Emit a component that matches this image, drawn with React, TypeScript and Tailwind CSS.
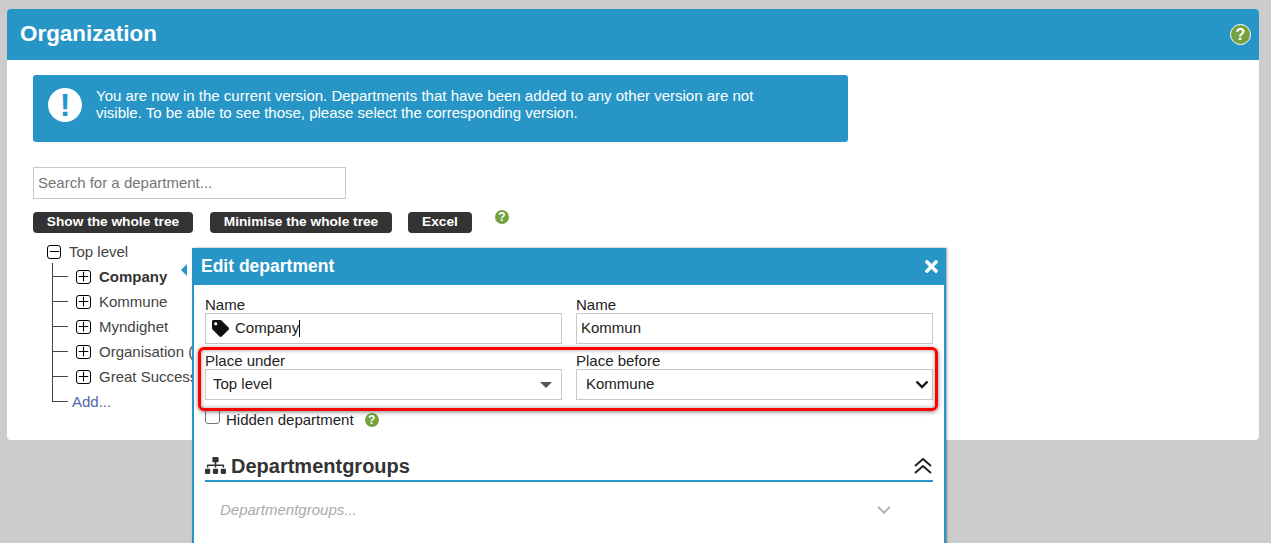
import { ChevronDown, Minus, Plus } from "lucide-react";
import { FaSitemap, FaTag, FaTimes } from "react-icons/fa";

const departments = [
  { name: "Company", bold: true },
  { name: "Kommune" },
  { name: "Myndighet" },
  { name: "Organisation (" },
  { name: "Great Success" },
];

const HelpIcon = ({ className }: { className: string }) => (
  <span className={`flex items-center justify-center rounded-full bg-[#74a23f] font-bold text-white ${className}`}>?</span>
);

const TreeBox = ({ open, wide }: { open?: boolean; wide?: boolean }) => (
  <span className={`flex h-[14px] shrink-0 items-center justify-center rounded-[3px] border border-black bg-white text-black ${wide ? "w-[15px]" : "w-[14px]"}`}>
    {open ? <Minus size={15} strokeWidth={1.7} className="shrink-0" /> : <Plus size={15} strokeWidth={1.7} className="shrink-0" />}
  </span>
);

const Tree = () => (
  <div className="mt-[6px] text-[15px] leading-[25px] text-[#444]">
    <div className="flex h-[25px] items-center gap-[8px] pl-[14px]">
      <TreeBox open />
      <span>Top level</span>
    </div>
    <div className="relative ml-[19px]">
      <div className="absolute -top-[1px] left-0 h-[139px] w-px bg-[#444]" />
      {departments.map((d) => (
        <div key={d.name} className="flex h-[25px] items-center">
          <span className="h-px w-[16px] bg-[#444]" />
          <span className="ml-[8px]"><TreeBox wide /></span>
          <span className={`ml-[8px] whitespace-nowrap ${d.bold ? "font-bold text-[#333]" : ""}`}>{d.name}</span>
        </div>
      ))}
      <div className="flex h-[25px] items-center">
        <span className="h-px w-[16px] bg-[#444]" />
        <span className="ml-[4px] text-[#5068a8]">Add...</span>
      </div>
    </div>
  </div>
);

const Field = ({ label, children }: { label: string; children: React.ReactNode }) => (
  <div>
    <div className="text-[15px] leading-[16px] text-[#222]">{label}</div>
    <div className="flex h-[31px] items-center border border-[#c8c8c8] bg-white text-[15px] text-[#222]">{children}</div>
  </div>
);

const EditDialog = () => (
  <div className="absolute left-[192px] top-[248px] h-[320px] w-[754px] border-x-2 border-[#2796c7] bg-white shadow-[1px_0_2px_rgba(0,0,0,0.4)]">
    <div className="-mx-[2px] flex h-[37px] items-center justify-between bg-[#2796c7] pl-[9px] pr-[5px] text-white">
      <span className="text-[17.5px] font-bold">Edit department</span>
      <FaTimes size={19} />
    </div>
    <div className="px-[11px]">
      <div className="mt-[12px] grid grid-cols-[357px_357px] gap-x-[14px] gap-y-[9px]">
        <Field label="Name">
          <FaTag size={17} className="ml-[6px] text-[#111]" />
          <span className="ml-[6px]">Company</span>
          <span className="h-[17px] w-px bg-[#111]" />
        </Field>
        <Field label="Name">
          <span className="ml-[4px]">Kommun</span>
        </Field>
        <Field label="Place under">
          <span className="ml-[7px] flex-1">Top level</span>
          <span className="mr-[9px] h-0 w-0 border-x-[6px] border-t-[6px] border-x-transparent border-t-[#555]" />
        </Field>
        <Field label="Place before">
          <span className="ml-[9px] flex-1">Kommune</span>
          <svg width="14" height="9" viewBox="0 0 14 9" fill="none" stroke="#111" strokeWidth="2.4" className="mr-[3px]">
            <path d="M1.5 1.5 L7 7 L12.5 1.5" />
          </svg>
        </Field>
      </div>
      <div className="mt-[11px] flex h-[18px] items-center">
        <span className="-mt-[7px] h-[15px] w-[15px] rounded-[3px] border border-[#767676] bg-white" />
        <span className="ml-[6px] text-[15px] text-[#222]">Hidden department</span>
        <HelpIcon className="ml-[11px] h-[14px] w-[14px] text-[12px]" />
      </div>
      <div className="mt-[21px] flex h-[32px] items-center border-b-2 border-[#2796c7] text-[#333]">
        <FaSitemap size={21} />
        <span className="ml-[5px] flex-1 pt-[1px] text-[20px] font-bold">Departmentgroups</span>
        <svg width="18" height="16" viewBox="0 0 18 16" fill="none" stroke="#222" strokeWidth="2" className="mr-[1px] mt-[2px]">
          <path d="M1 8 L9 1 L17 8" />
          <path d="M1 15 L9 8 L17 15" />
        </svg>
      </div>
      <div className="flex h-[56px] items-center pl-[15px] pr-[38px]">
        <span className="flex-1 text-[15px] italic text-[#aaa]">Departmentgroups...</span>
        <ChevronDown size={22} strokeWidth={2} className="text-[#b0b0b0]" />
      </div>
    </div>
  </div>
);

export default function App() {
  return (
    <div className="relative h-[543px] overflow-hidden bg-[#cccccc] pl-[7px] pt-[9px] font-['Liberation_Sans',sans-serif]">
      <div className="h-[431px] w-[1252px] overflow-hidden rounded-[4px] bg-white">
        <div className="flex h-[51px] items-center justify-between bg-[#2796c7] pl-[13px] pr-[8px]">
          <h1 className="pb-[2px] text-[22.4px] font-bold text-white">Organization</h1>
          <HelpIcon className="h-[21px] w-[21px] border border-white text-[16px]" />
        </div>
        <div className="px-[26px] pt-[15px]">
          <div className="flex h-[67px] w-[815px] rounded-[3px] bg-[#2796c7] pl-[15px] pt-[13px]">
            <span className="flex h-[34px] w-[34px] shrink-0 items-center justify-center rounded-full bg-white text-[32px] font-bold leading-none text-[#2796c7]">!</span>
            <p className="-mt-[1px] ml-[14px] w-[680px] text-[15px] leading-[17px] text-white">
              You are now in the current version. Departments that have been added to any other version are not visible. To be able to see those, please select the corresponding version.
            </p>
          </div>
          <input
            placeholder="Search for a department..."
            className="mt-[25px] block h-[32px] w-[313px] border border-[#c8c8c8] px-[4px] pb-[2px] text-[15px] placeholder:text-[#757575]"
          />
          <div className="mt-[13px] flex items-start">
            <button className="h-[21px] w-[160px] rounded-[4px] bg-[#333] pb-[1px] text-[13.7px] font-bold text-white">Show the whole tree</button>
            <button className="ml-[17px] h-[21px] w-[182px] rounded-[4px] bg-[#333] pb-[1px] text-[13.7px] font-bold text-white">Minimise the whole tree</button>
            <button className="ml-[16px] h-[21px] w-[64px] rounded-[4px] bg-[#333] pb-[1px] text-[13.7px] font-bold text-white">Excel</button>
            <HelpIcon className="ml-[23px] -mt-[2px] h-[14px] w-[14px] text-[12px]" />
          </div>
          <Tree />
        </div>
      </div>
      <span className="absolute left-[181px] top-[264px] h-0 w-0 border-y-[6px] border-r-[6px] border-y-transparent border-r-[#2796c7]" />
      <EditDialog />
      {/* red highlight drawn over the dialog */}
      <div className="absolute left-[198px] top-[347px] h-[64px] w-[740px] rounded-[6px] border-[3px] border-[#ff0000] shadow-[0_1px_4px_rgba(0,0,0,0.5),inset_0_0_4px_rgba(0,0,0,0.4)]" />
    </div>
  );
}
